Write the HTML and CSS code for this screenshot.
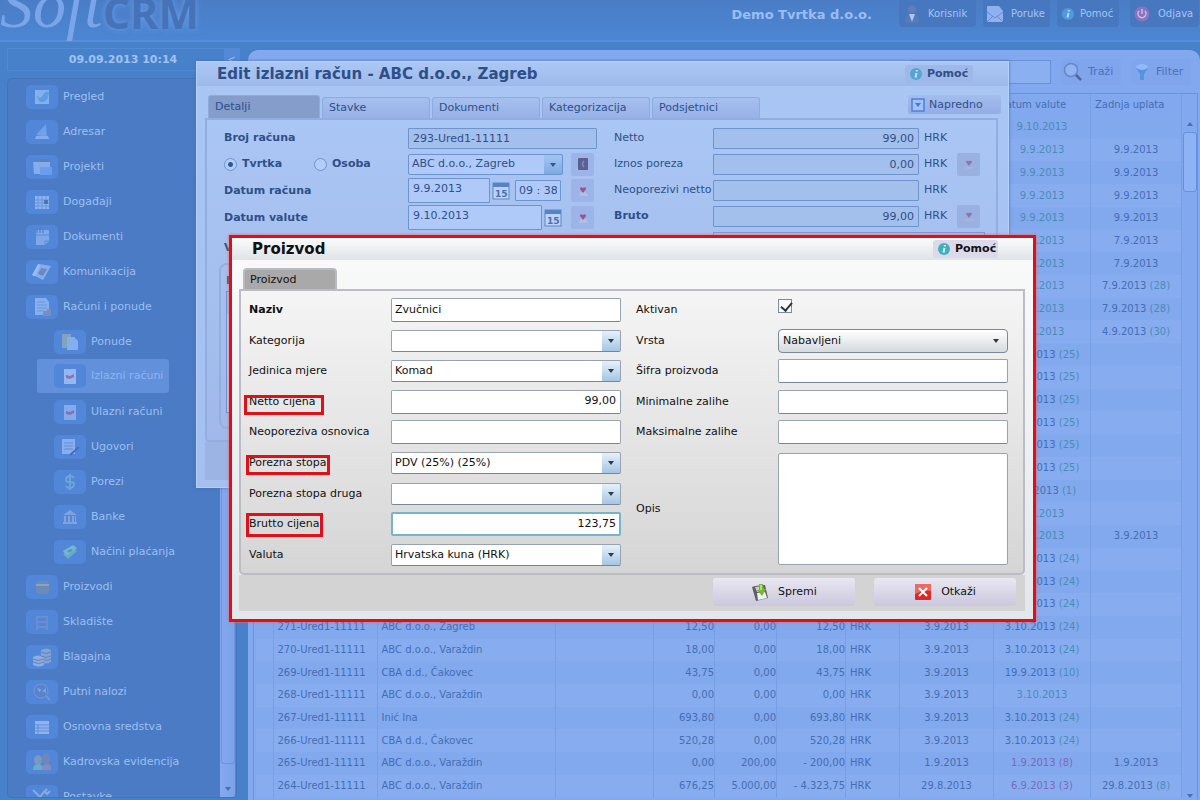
FILE: index.html
```html
<!DOCTYPE html>
<html lang="hr">
<head>
<meta charset="utf-8">
<title>Soft CRM</title>
<link rel="stylesheet" href="styles.css">
</head>
<body>
<div class="app">
  <header class="topbar">
    <div class="logo"><span class="logo-soft">Soft</span><span class="logo-crm">CRM</span></div>
    <strong class="company">Demo Tvrtka d.o.o.</strong>
    <nav class="top-actions">
      <button class="top-btn korisnik"><svg width="18" height="20" viewBox="0 0 18 20"><circle cx="9" cy="5" r="4" fill="#5f7db8"/><path d="M2 18q0-8 7-8t7 8q-7 3-14 0z" fill="#5a79b9"/><path d="M6 10l3 8 3-8z" fill="#a9c6f5"/></svg>Korisnik</button>
      <button class="top-btn poruke"><svg width="18" height="18" viewBox="0 0 18 18"><path d="M1 6V1h12l4 5v11H1z" fill="#8fb1f0"/><path d="M1 7l8 6 8-6M1 17l6-6M17 17l-6-6" stroke="#5f8cdc" fill="none"/></svg>Poruke</button>
      <button class="top-btn pomoc"><svg width="14" height="14" viewBox="0 0 14 14"><circle cx="7" cy="7" r="6" fill="#4c9be0"/><path d="M7.500 6L6.500 10.500M7.800 3v1.500" stroke="#b7d6fb" stroke-width="2"/></svg>Pomoć</button>
      <button class="top-btn odjava"><svg width="16" height="16" viewBox="0 0 16 16"><circle cx="8" cy="8" r="7.500" fill="#8a74bd"/><path d="M5 5a4 4 0 1 0 6 0M8 3v5" stroke="#c3c0ee" stroke-width="1.500" fill="none"/></svg>Odjava</button>
    </nav>
  </header>

  <div class="workspace">
    <aside class="side">
      <div class="clock"><strong>09.09.2013 10:14</strong><button class="collapse" aria-label="Sakrij izbornik">&lt;</button></div>
      <nav class="menu">
        <a href="#"><i><svg viewBox="0 0 20 20"><path d="M3 3h14v14H3z" fill="#8fb8ee"/><path d="M5 8q3 6 6 0t6-2q-1 8-6 9t-6-7z" fill="#5ba3ea"/></svg></i>Pregled</a>
        <a href="#"><i><svg viewBox="0 0 20 20"><path d="M4 13L14 2l1 13z" fill="#71a8f2"/><path d="M4 14h12l1 3H3z" fill="#8db3f0"/></svg></i>Adresar</a>
        <a href="#"><i><svg viewBox="0 0 20 20"><path d="M1 3h17v14H2z" fill="#8fb4ef"/><path d="M1 2h17v3H1z" fill="#5f80bb"/><path d="M8 10h12v8H8z" fill="#6ea2f2"/></svg></i>Projekti</a>
        <a href="#"><i><svg viewBox="0 0 20 20"><path d="M3 4h14v13H3z" fill="#9abcf3"/><path d="M3 8h14M3 11h14M3 14h14M6 4v13M10 4v13M14 4v13" stroke="#6c98dd"/><path d="M12 8h4v4h-4z" fill="#4b71b4"/></svg></i>Događaji</a>
        <a href="#"><i><svg viewBox="0 0 20 20"><path d="M4 3h13v11l-4 4H4z" fill="#87aeee"/><path d="M5 2v4M8 2v4M11 2v4" stroke="#5175b5"/><path d="M4 8h13M13 18v-4h4" stroke="#5c8cda" fill="none"/></svg></i>Dokumenti</a>
        <a href="#"><i><svg viewBox="0 0 20 20"><path d="M7 2l12 2-8 14L1 13z" fill="#91b4ed"/><path d="M6 2q3 0 1 4L4 13q-2 2-4 0z" fill="#a9c5f4"/><path d="M9 6l6 1-4 7-5-2z" fill="#7188bd"/></svg></i>Komunikacija</a>
        <a href="#"><i><svg viewBox="0 0 20 20"><path d="M3 1h11l3 4v13H3z" fill="#91b6f1"/><path d="M5 5h8M5 8h10M5 11h10M5 14h7" stroke="#6e9be3"/><path d="M11 19v-5h4v-2h4v7z" fill="#7d91ba"/></svg></i>Računi i ponude</a>
        <a href="#" class="sub"><i><svg viewBox="0 0 20 20"><path d="M2 2h9v14H2z" fill="#8aa9b8"/><path d="M7 5h7l4 4v9H7z" fill="#8eb5f3"/></svg></i>Ponude</a>
        <a href="#" class="sub active"><i><svg viewBox="0 0 20 20"><path d="M4 3h12v15H4z" fill="#a1c0f5"/><path d="M6 9l4 1 4-2v3l-4 2-4-1z" fill="#9b6fa9"/></svg></i>Izlazni računi</a>
        <a href="#" class="sub"><i><svg viewBox="0 0 20 20"><path d="M4 3h12v15H4z" fill="#8db1ee"/><path d="M6 9l4 1 4-2v3l-4 2-4-1z" fill="#8b6fb5"/></svg></i>Ulazni računi</a>
        <a href="#" class="sub"><i><svg viewBox="0 0 20 20"><path d="M2 2h13v15H2z" fill="#93b6f2"/><path d="M4 6h9M4 9h9M4 12h9" stroke="#628fd9"/><path d="M10 18l9-8" stroke="#4666c7" stroke-width="2"/></svg></i>Ugovori</a>
        <a href="#" class="sub"><i><svg viewBox="0 0 20 20"><path d="M14 6q-1-2-4-2T6 7t4 3 4 3-4 3-4-2M10 2v16" stroke="#74acd3" stroke-width="2" fill="none"/></svg></i>Porezi</a>
        <a href="#" class="sub"><i><svg viewBox="0 0 20 20"><path d="M3 8l7-5 7 5zM4 9h2v6H4zM8 9h2v6H8zM12 9h2v6h-2zM15 9h1v6h-1zM3 15h14v2H3z" fill="#86a9e0"/></svg></i>Banke</a>
        <a href="#" class="sub"><i><svg viewBox="0 0 20 20"><path d="M3 12L13 5l4 4-9 8z" fill="#6ab1c6"/><path d="M3 9l10-6 4 3-10 8z" fill="#7dc0cb"/><path d="M7 9l4-2 2 1-4 3z" fill="#5595c7"/></svg></i>Načini plaćanja</a>
        <a href="#"><i><svg viewBox="0 0 20 20"><rect x="4" y="4" width="13" height="13" rx="3" fill="#6e8cae"/><path d="M4 8h13" stroke="#93a9bd" stroke-width="2"/></svg></i>Proizvodi</a>
        <a href="#"><i><svg viewBox="0 0 20 20"><path d="M5 4v14M15 4v14M5 5h10M5 10h10M5 15h10" stroke="#7b92c4" stroke-width="1.500" fill="none"/></svg></i>Skladište</a>
        <a href="#"><i><svg viewBox="0 0 20 20"><path d="M9 3q5-3 10 0v12q-5 3-10 0z" fill="#8da8d1"/><path d="M1 10q5-3 11 0v8q-5 3-11 0z" fill="#98b4df"/><path d="M9 5q5 3 10 0M9 9q5 3 10 0M12 13q4 1 7-1M1 12q5 3 11 0M1 15q5 3 11 0" stroke="#6085c1" fill="none"/></svg></i>Blagajna</a>
        <a href="#"><i><svg viewBox="0 0 20 20"><circle cx="9" cy="9" r="7" fill="#5a83ca" stroke="#7c9bd2"/><path d="M5 6l4 1-1 4zM10 9l4-3v5z" fill="#83a9e6"/><path d="M14 14l4 4" stroke="#7e9bcf" stroke-width="2"/></svg></i>Putni nalozi</a>
        <a href="#"><i><svg viewBox="0 0 20 20"><path d="M3 4h14v13H3z" fill="#9abcf4"/><path d="M3 8h14M3 11h14M3 14h14M6 7v10" stroke="#668fd6"/></svg></i>Osnovna sredstva</a>
        <a href="#"><i><svg viewBox="0 0 20 20"><ellipse cx="6" cy="8" rx="4" ry="5" fill="#8599bd"/><ellipse cx="14" cy="7" rx="4" ry="6" fill="#7388b5"/><path d="M1 18q0-6 5-6t5 6z" fill="#6fb3bd"/><path d="M10 18q0-6 5-6t4 6z" fill="#8d8fbb"/></svg></i>Kadrovska evidencija</a>
        <a href="#"><i><svg viewBox="0 0 20 20"><path d="M1 3l9 9M18 4l-3 3-2-2 2-3-4 4-6 9" stroke="#8fb0e4" stroke-width="2" fill="none"/></svg></i>Postavke</a>
        <div class="menu-scroll"></div>
      </nav>
    </aside>

    <main class="content">
      <div class="toolbar">
        <input class="search" aria-label="Pretraga">
        <button class="tool"><svg width="22" height="22" viewBox="0 0 22 22"><circle cx="9" cy="9" r="6.500" fill="#8fb3f3" stroke="#6687c8" stroke-width="1.500"/><path d="M14 14l5 5" stroke="#4b68a3" stroke-width="2.500"/></svg>Traži</button>
        <button class="tool"><svg width="20" height="20" viewBox="0 0 20 20"><ellipse cx="10" cy="5" rx="6" ry="3" fill="#8fbaf5"/><path d="M4 6q6 4 12 0l-4 6v6H8v-6z" fill="#5592e2"/></svg>Filter</button>
      </div>
      <div class="grid-area">
        <table class="invoices">
          <colgroup><col class="c-check"><col class="c-id"><col><col class="c-note"><col class="c-net"><col class="c-tax"><col class="c-total"><col class="c-cur"><col class="c-date"><col class="c-due"><col class="c-paid"></colgroup>
          <thead><tr><th></th><th></th><th></th><th></th><th></th><th></th><th></th><th></th><th></th><th>Datum valute</th><th>Zadnja uplata</th></tr></thead>
          <tbody id="rows"></tbody>
        </table>
        <div class="grid-scroll"><span class="up"></span><span class="thumb"></span><span class="down"></span></div>
      </div>
    </main>
  </div>
</div>

<section class="dialog invoice" aria-label="Edit izlazni račun">
  <div class="dlg-title"><h2>Edit izlazni račun - ABC d.o.o., Zagreb</h2>
    <button class="help"><svg width="14" height="14" viewBox="0 0 14 14"><circle cx="7" cy="7" r="6" fill="#57a3d6"/><path d="M7.500 6L6.500 10.500M7.800 3v1.500" stroke="#c5e2fa" stroke-width="2"/></svg>Pomoć</button></div>
  <div class="tabs">
    <button class="tab on">Detalji</button><button class="tab">Stavke</button><button class="tab">Dokumenti</button><button class="tab">Kategorizacija</button><button class="tab">Podsjetnici</button>
    <button class="advanced"><svg width="14" height="14" viewBox="0 0 14 14"><rect x="1" y="1" width="12" height="12" fill="#a4c0f5" stroke="#4e80d8" stroke-width="1.500"/><path d="M4 5h6L7 9z" fill="#4777cf"/></svg>Napredno</button>
  </div>
  <div class="inv-panel">
    <div class="inv-left">
      <div class="line"><label for="broj">Broj računa</label><input id="broj" class="ro grow" value="293-Ured1-11111" readonly></div>
      <div class="line"><span class="radios"><label><input type="radio" name="vrsta" checked>Tvrtka</label><label><input type="radio" name="vrsta">Osoba</label></span>
        <span class="combo blue w-combo"><select aria-label="Tvrtka"><option>ABC d.o.o., Zagreb</option></select></span>
        <button class="sq" aria-label="Adresar"><svg width="12" height="14" viewBox="0 0 12 14"><rect x="1" y="1" width="10" height="12" rx="1" fill="#5a6090"/><path d="M7 4q-3 3 0 6" stroke="#8d8db8" stroke-width="1.500" fill="none"/></svg></button></div>
      <div class="line tall"><label for="datum">Datum računa</label><input id="datum" class="w-date" value="9.9.2013"><svg class="cal" width="18" height="18" viewBox="0 0 18 18"><rect x="1" y="1" width="16" height="16" fill="#bcd2f8" stroke="#6287bd"/><path d="M1 1h16v4H1z" fill="#5384c7"/><text x="3" y="15">15</text></svg><input class="w-time" value="09 : 38" aria-label="Vrijeme"><button class="sq" aria-label="Zadano"><svg width="12" height="14" viewBox="0 0 12 14"><path d="M3 9q3-3 7 0l1 3H2z" fill="#b2bfe5"/><path d="M6 9L3 5q0-3 3-1 3-2 3 1z" fill="#9a548d"/></svg></button></div>
      <div class="line tall"><label for="valuta-d">Datum valute</label><input id="valuta-d" class="w-due" value="9.10.2013"><svg class="cal" width="18" height="18" viewBox="0 0 18 18"><rect x="1" y="1" width="16" height="16" fill="#bcd2f8" stroke="#6287bd"/><path d="M1 1h16v4H1z" fill="#5384c7"/><text x="3" y="15">15</text></svg><button class="sq" aria-label="Zadano"><svg width="12" height="14" viewBox="0 0 12 14"><path d="M3 9q3-3 7 0l1 3H2z" fill="#b2bfe5"/><path d="M6 9L3 5q0-3 3-1 3-2 3 1z" fill="#9a548d"/></svg></button></div>
      <div class="line after"><span>V</span></div>
      <fieldset class="group"><legend>P</legend><div class="group-grid"></div></fieldset>
    </div>
    <div class="inv-right">
      <div class="line"><label for="netto">Netto</label><input id="netto" class="ro num grow" value="99,00" readonly><span class="cur">HRK</span></div>
      <div class="line"><label for="porez">Iznos poreza</label><input id="porez" class="ro num grow" value="0,00" readonly><span class="cur">HRK</span><button class="sq off" aria-label="Zadano"><svg width="12" height="14" viewBox="0 0 12 14"><path d="M3 10h7v2H2z" fill="#a5b6dd"/><path d="M6 9L3 5q0-2 3-1 3-1 3 1z" fill="#9472ad"/></svg></button></div>
      <div class="line"><label for="neop">Neoporezivi netto</label><input id="neop" class="ro num grow" readonly><span class="cur">HRK</span></div>
      <div class="line"><label for="bruto"><b>Bruto</b></label><input id="bruto" class="ro num grow" value="99,00" readonly><span class="cur">HRK</span><button class="sq off" aria-label="Zadano"><svg width="12" height="14" viewBox="0 0 12 14"><path d="M3 10h7v2H2z" fill="#a5b6dd"/><path d="M6 9L3 5q0-2 3-1 3-1 3 1z" fill="#9472ad"/></svg></button></div>
      <textarea class="note" aria-label="Napomena"></textarea>
    </div>
  </div>
  <div class="inv-foot"></div>
</section>

<section class="dialog product" aria-label="Proizvod">
  <div class="dlg-title"><h2>Proizvod</h2>
    <button class="help"><svg width="14" height="14" viewBox="0 0 14 14"><circle cx="7" cy="7" r="6" fill="#3fb0bd"/><path d="M7.500 6L6.500 10.500M7.800 3v1.500" stroke="#eaf9fb" stroke-width="2"/></svg>Pomoć</button></div>
  <div class="tabs"><button class="tab on">Proizvod</button></div>
  <form class="prod-panel">
    <div class="row"><label for="naziv"><b>Naziv</b></label><input id="naziv" value="Zvučnici"></div>
    <div class="row"><label for="aktivan">Aktivan</label><input type="checkbox" id="aktivan" checked></div>
    <div class="row"><label for="kat">Kategorija</label><span class="combo"><select id="kat"><option></option></select></span></div>
    <div class="row"><label for="vrsta">Vrsta</label><span class="combo soft"><select id="vrsta"><option>Nabavljeni</option></select></span></div>
    <div class="row"><label for="jed">Jedinica mjere</label><span class="combo"><select id="jed"><option>Komad</option></select></span></div>
    <div class="row"><label for="sifra">Šifra proizvoda</label><input id="sifra"></div>
    <div class="row"><label for="nc">Netto cijena</label><input id="nc" class="num" value="99,00"><span class="mark netto"></span></div>
    <div class="row"><label for="min">Minimalne zalihe</label><input id="min"></div>
    <div class="row"><label for="no">Neoporeziva osnovica</label><input id="no" class="num"></div>
    <div class="row"><label for="max">Maksimalne zalihe</label><input id="max"></div>
    <div class="row"><label for="ps">Porezna stopa</label><span class="combo"><select id="ps"><option>PDV (25%) (25%)</option></select></span><span class="mark porez"></span></div>
    <div class="row opis"><label for="opis">Opis</label><textarea id="opis"></textarea></div>
    <div class="row"><label for="ps2">Porezna stopa druga</label><span class="combo"><select id="ps2"><option></option></select></span></div>
    <div class="row"><label for="bc">Brutto cijena</label><input id="bc" class="num focus" value="123,75"><span class="mark brutto"></span></div>
    <div class="row"><label for="val">Valuta</label><span class="combo"><select id="val"><option>Hrvatska kuna (HRK)</option></select></span></div>
  </form>
  <div class="actions">
    <button class="action"><svg width="18" height="18" viewBox="0 0 18 18"><path d="M1 4l3-1 10-1 3 13-12 3z" fill="#5d5f60"/><path d="M4 4l8-1 1 5-7 1z" fill="#c9cdcd"/><path d="M6 10l8-1 2 6-9 2z" fill="#f1f3f3"/><path d="M8 1h4v5h3l-4 7-5-6h2z" fill="#76b82f"/><path d="M9 2h2v5H9z" fill="#b6e06b"/></svg>Spremi</button>
    <button class="action"><svg width="18" height="18" viewBox="0 0 18 18"><rect x="1" y="1" width="16" height="16" rx="1" fill="#d92a2a"/><path d="M1 1h16v7q-8-1-16 3z" fill="#ec6a62"/><path d="M5 5l8 8M13 5l-8 8" stroke="#fff" stroke-width="2"/></svg>Otkaži</button>
  </div>
</section>
<script src="app.js"></script>
</body>
</html>
```
FILE: styles.css
```css
* { box-sizing: border-box; }
html, body { height: 100%; }
body { margin: 0; overflow: hidden; position: relative; background: #4781ca; font: 10px/14px "DejaVu Sans", sans-serif; }
button, input, select, textarea { font: inherit; color: inherit; margin: 0; }
button { border: 0; background: none; padding: 0; display: flex; align-items: center; }
svg { flex: none; display: block; }

.app { height: 100%; display: flex; flex-direction: column; color: #a4c4f5; }
.topbar { height: 42px; flex: none; display: flex; align-items: flex-start; background: linear-gradient(#4a7dc6, #4c86d2); border-bottom: 2px solid #568edb; }
.logo { flex: 1; height: 48px; display: flex; align-items: flex-end; white-space: nowrap; }
.logo-soft { font: italic 66px/66px "Liberation Serif", serif; color: #7ba5ea; padding-bottom: 10px; }
.logo-crm { font: bold 43px/44px "Open Sans", sans-serif; color: #4672b8; padding: 0 0 13px; text-shadow: 0 0 6px #6c9cea; }
.company { font-size: 13px; line-height: 30px; color: #9bbdf3; margin-right: 27px; }
.top-actions { display: flex; }
.top-btn { height: 27px; background: #4777bf; border-radius: 0 0 4px 4px; padding: 0 4px; margin-right: 7px; white-space: nowrap; }
.korisnik { width: 77px; gap: 7px; }
.poruke { width: 67px; gap: 7px; padding: 0 3px; }
.pomoc { width: 62px; gap: 5px; margin-right: 11px; }
.odjava { width: 69px; gap: 8px; margin-right: 1px; }

.workspace { flex: 1; min-height: 0; display: flex; gap: 8px; }
.side { width: 233px; margin-left: 7px; flex: none; display: flex; flex-direction: column; padding-top: 6px; }
.clock { height: 23px; flex: none; display: flex; align-items: center; border: 1px solid #538ad6; color: #9fc2f3; }
.clock strong { flex: 1; text-align: center; font-size: 11px; padding-left: 14px; }
.collapse { width: 15px; height: 22px; background: #5489d8; justify-content: center; }
.menu { flex: 1; margin: 7px 3px 2px 0; padding: 0 0 0 18px; overflow: hidden; background: #4a7bc4; border: 1px solid #4373ba; border-radius: 5px; position: relative; }
.menu a { height: 35px; display: flex; align-items: center; gap: 5px; color: #9dbff2; text-decoration: none; font-size: 11px; }
.menu i { width: 32px; height: 24px; flex: none; background: #5286d8; border-radius: 5px; display: grid; place-items: center; }
.menu i svg { width: 20px; height: 20px; opacity: .85; }
.menu .sub { margin-left: 11px; padding-left: 17px; width: 132px; white-space: nowrap; }
.menu .active { height: 34px; margin-bottom: 1px; background: #6290da; border-radius: 3px; color: #8fb5f3; }
.menu-scroll { position: absolute; right: 0; top: 0; bottom: 0; width: 16px; border-right: 1px solid #5683cd; background: linear-gradient(90deg, #84a9f1, #7ba1e9); }
.menu-scroll::before { content: ""; position: absolute; left: 1px; right: 0; bottom: 33px; height: 300px; border: 1px solid #6c94dd; border-top: 0; border-radius: 0 0 3px 3px; }
.menu-scroll::after { content: ""; position: absolute; left: 5px; bottom: 6px; border: 3px solid transparent; border-top: 4px solid #486eb5; border-bottom: 0; }

.content { flex: 1; min-width: 0; margin-top: 8px; background: #82a9ef; border-radius: 10px 10px 0 0; display: flex; flex-direction: column; color: #456db4; padding: 0 2px 0 5px; }
.toolbar { height: 43px; flex: none; display: flex; justify-content: flex-end; align-items: center; gap: 10px; padding-right: 7px; color: #4a72bb; font-size: 11px; }
.search { width: 140px; height: 24px; border: 1px solid #6991d8; background: #8bb0f2; }
.tool { width: 60px; height: 26px; gap: 4px; padding-left: 1px; background: #80a5ec; border-radius: 4px; }
.grid-area { flex: 1; min-height: 0; display: flex; border: 1px solid #6b93da; border-bottom: 0; padding: 0 0 2px 2px; }
.invoices { flex: 1; height: 100%; table-layout: fixed; border-collapse: collapse; width: 100%; }
.invoices th, .invoices td { padding: 0 4px; border-right: 1px solid #769fe4; text-align: left; font-weight: 400; white-space: nowrap; overflow: hidden; }
.invoices th { height: 22px; }
.invoices tbody tr:nth-child(odd) { background: #82a8ed; }
.invoices tbody tr:nth-child(even) { background: #87adf0; }
.invoices td.r { text-align: right; padding: 0; }
.invoices td.c { text-align: center; }
.ok { color: #4a8cb9; } .late { color: #7c69bb; }
.c-check { width: 17px; } .c-id { width: 104px; } .c-note { width: 98px; } .c-net { width: 61px; } .c-tax { width: 62px; } .c-total { width: 69px; } .c-cur { width: 54px; } .c-date { width: 94px; } .c-due { width: 97px; } .c-paid { width: 91px; }
.grid-scroll { width: 15px; flex: none; margin-top: 22px; display: flex; flex-direction: column; align-items: center; padding-top: 6px; }
.up { border: 3px solid transparent; border-bottom: 4px solid #486eb5; border-top: 0; }
.thumb { width: 14px; height: 60px; margin: 6px 0 auto; border: 1px solid #6790da; border-radius: 3px; background: #8db2f5; }
.down { border: 3px solid transparent; border-top: 4px solid #486eb5; border-bottom: 0; }

.dialog { position: absolute; display: flex; flex-direction: column; }
.dlg-title { flex: none; display: flex; align-items: center; justify-content: space-between; }
.dlg-title h2 { margin: 0; font-size: 15px; line-height: 20px; }
.help { height: 18px; gap: 4px; padding: 0 2px 0 4px; font-weight: 700; font-size: 11px; border-radius: 3px; width: 66px; }
.tabs { display: flex; align-items: flex-end; flex: none; }
.num { text-align: right; }

.invoice { left: 196px; right: 191px; top: 61px; height: 427px; padding-right: 8px; padding-left: 8px; color: #2f4f88; background: linear-gradient(#a9c6f5, #a4bff0); border: 1px solid #b5d0fa; box-shadow: 0 0 3px #4a6db0; }
.invoice .dlg-title { height: 24px; margin: 0 -8px; padding: 0 35px 0 20px; background: linear-gradient(#abc7f3, #9dbaeb); }
.invoice .help { background: #9fb8ea; width: 68px; }
.invoice .tabs { height: 32px; padding: 0 0 0 3px; gap: 2px; }
.invoice .tab { width: 108px; height: 21px; padding-left: 6px; border: 1px solid #8eabe0; border-bottom: 0; border-radius: 3px 3px 0 0; background: linear-gradient(#a5bfee, #98b1e8); font-size: 11px; }
.invoice .tab.on { width: 112px; height: 23px; background: #849dcb; }
.advanced { width: 93px; height: 19px; margin: 0 -1px 4px auto; gap: 4px; padding-left: 3px; background: linear-gradient(#a3bdee, #94ade6); border-radius: 3px; font-size: 11px; }
.inv-panel { flex: 1; min-height: 0; display: flex; margin-right: 2px; gap: 17px; padding: 5px 11px 0 17px; border: 2px solid #92aee1; border-radius: 0 0 4px 4px; overflow: hidden; background: linear-gradient(#aac6f4, #a0b9ea); }
.inv-left { width: 373px; flex: none; font-weight: 700; }
.inv-right { flex: 1; }
.inv-left input, .inv-left select { font-weight: 400; }
.line { display: flex; align-items: center; height: 26px; }
.line.tall { height: 27px; }
.line > label, .radios { width: 184px; flex: none; font-size: 11px; }
.inv-right .line > label { width: 99px; }
.radios { display: flex; }
.radios label { width: 90px; display: flex; align-items: center; }
.radios input { appearance: none; width: 13px; height: 13px; margin-right: 5px; border: 1px solid #6d93cf; border-radius: 50%; background: #b4cdf8; }
.radios input:checked { background: radial-gradient(#35558e 2px, #b4cdf8 3px); }
.invoice input:not([type=radio]) { height: 21px; min-width: 0; border: 1px solid #6d94cc; border-radius: 1px; background: #afcaf8; padding: 0 4px; font-size: 11px; }
.invoice input.ro { background: #a3bfec; }
.invoice .tall input { height: 25px; padding-bottom: 4px; }
.grow { flex: 1; }
.invoice .w-date { width: 82px; } .invoice .w-due { width: 134px; } .invoice .tall .w-time { width: 46px; height: 21px; padding: 0 3px; }
.w-combo { width: 155px; flex: none; }
.cal { margin: 0 5px 0 2px; }
.cal text { font: 700 9px "DejaVu Sans", sans-serif; fill: #4a6fae; }
.sq { width: 23px; height: 23px; flex: none; justify-content: center; background: #9cb4e8; border-radius: 2px; margin-left: 8px; }
.tall .sq { margin-left: auto; margin-right: 3px; }
.cur { width: 30px; margin-left: 5px; font-size: 11px; flex: none; }
.inv-right .line:not(:has(.sq))::after { content: ""; width: 31px; flex: none; }
.sq.off { background: #98b1e0; }
.inv-right .sq { margin-left: 3px; margin-right: 5px; width: 23px; }
.note { width: 272px; height: 40px; margin: 3px 0 0 99px; border: 1px solid #7b9bd0; background: none; display: block; }
.after { margin-top: 4px; font-size: 11px; }
.group { margin: 2px 0 0 -5px; height: 166px; border: 2px solid #93aee1; border-radius: 8px; padding: 6px 5px; }
.group legend { float: left; padding: 0; font-size: 11px; line-height: 20px; }
.group-grid { clear: both; height: 122px; border: 1px solid #6d94cc; background: linear-gradient(#a3bfee 22px, #b6cffa 22px); }
.inv-foot { height: 38px; margin-bottom: 7px; flex: none; background: #9cb4e4; }

.product { left: 229px; right: 164px; top: 235px; height: 387px; border: 3px solid #dd1018; padding: 0 8px 8px 7px; color: #111; background: linear-gradient(#fafafa, #e3e7ea); box-shadow: 0 0 3px #e66; }
.product .dlg-title { height: 22px; margin: 0 -8px 0 -7px; padding: 0 35px 1px 20px; background: linear-gradient(#fafbfb, #dfe3e6); }
.product .help { background: #dcdaea; width: 65px; }
.product .tabs { height: 29px; padding-left: 4px; }
.product .tab { width: 94px; height: 21px; padding-left: 5px; background: #a9a9a9; border: 2px solid #b9bbc2; border-bottom: 0; border-radius: 4px 4px 0 0; font-size: 11px; }
.prod-panel { flex: 1; min-height: 0; margin: 0; display: grid; grid-template-columns: 372px 1fr; grid-auto-rows: 1fr; column-gap: 15px; padding: 4px 15px 3px 8px; border: 2px solid #bbbcc6; border-radius: 0 0 5px 5px; background: linear-gradient(#f5f5f5, #d5d5d5); }
.row { display: flex; align-items: center; position: relative; min-height: 0; font-size: 11px; }
.row > label { width: 142px; flex: none; }
.row > input:not([type=checkbox]), .combo { flex: 1; min-width: 0; }
.row > input:not([type=checkbox]) { height: 24px; border: 1px solid #97a3af; border-bottom-color: #76869a; border-radius: 2px; background: #fff; padding: 0 4px 2px 3px; }
.row > input.focus { border: 2px solid #75b5c9; padding-right: 3px; }
.row input[type=checkbox] { appearance: none; width: 14px; height: 14px; margin-bottom: 8px; border: 1px solid #7b8b98; background: #f8fafb; position: relative; }
.row input[type=checkbox]::after { content: ""; position: absolute; left: 4px; top: 0; width: 5px; height: 9px; border: solid #333; border-width: 0 2px 2px 0; transform: rotate(40deg); }
.opis { grid-column: 2; grid-row: 6 / span 4; }
.opis textarea { flex: 1; height: 112px; border: 1px solid #97a3af; border-radius: 2px; resize: none; }
.combo { position: relative; display: flex; height: 22px; }
.combo select { appearance: none; flex: 1; min-width: 0; border: 1px solid #97a3af; border-bottom-color: #76869a; border-radius: 2px; padding: 0 20px 0 3px; background: linear-gradient(#e5f1fb, #a5c6e3) right / 18px 100% no-repeat #fff; }
.combo::after { content: ""; position: absolute; right: 7px; top: 9px; border: 3px solid transparent; border-top: 4px solid #2c3b48; border-bottom: 0; }
.combo.soft { height: 24px; }
.combo.soft select { background: linear-gradient(#fff, #d5dade); border-color: #7c8a98; border-radius: 4px; padding-left: 4px; }
.combo.soft::after { right: 9px; top: 10px; }
.combo.blue { height: 21px; flex: none; }
.combo.blue select { font-size: 11px; border-color: #6d94cc; background: linear-gradient(#a2c4f4, #80a9e4) right / 18px 100% no-repeat #afcaf8; }
.combo.blue::after { border-top-color: #35558e; }
.mark { position: absolute; border: 3px solid #e01016; pointer-events: none; }
.mark.netto { left: -5px; top: 8px; width: 80px; height: 20px; }
.mark.porez { left: -3px; top: 7px; width: 84px; height: 20px; }
.mark.brutto { left: -3px; top: 4px; width: 77px; height: 24px; }
.actions { flex: none; height: 36px; background: #d3d3d3; display: flex; justify-content: flex-end; gap: 19px; padding: 3px 9px 5px; }
.action { width: 142px; justify-content: center; gap: 9px; background: linear-gradient(#e9e7f1, #cbc8de); border-radius: 3px; font-size: 11px; }
```
FILE: app.js
```js
const none = ["", "", "", "", "", ""];
const ok = t => `<span class="ok">${t}</span>`;
const late = t => `<span class="late">${t}</span>`;
const due = (d, n) => `${d} ${ok("(" + n + ")")}`;
const fill = (d, paid = "") => ["", ...none, "", d, paid];

const rows = [
  fill(ok("9.10.2013")),
  ...Array(4).fill(fill(ok("9.9.2013"), "9.9.2013")),
  fill(ok("9.9.2013"), "7.9.2013"),
  fill(ok("7.9.2013"), "7.9.2013"),
  fill(ok("9.9.2013"), due("7.9.2013", 28)),
  fill(ok("9.9.2013"), due("7.9.2013", 28)),
  fill(ok("9.9.2013"), due("4.9.2013", 30)),
  ...Array(6).fill(fill(due("4.10.2013", 25))),
  fill(due("10.9.2013", 1)),
  fill(ok("3.9.2013")),
  fill(ok("3.9.2013"), "3.9.2013"),
  ...Array(3).fill(fill(due("3.10.2013", 24))),
  ["271-Ured1-11111", "ABC d.o.o., Zagreb", "", "12,50", "0,00", "12,50", "HRK", "3.9.2013", due("3.10.2013", 24), ""],
  ["270-Ured1-11111", "ABC d.o.o., Varaždin", "", "18,00", "0,00", "18,00", "HRK", "3.9.2013", due("3.10.2013", 24), ""],
  ["269-Ured1-11111", "CBA d.d., Čakovec", "", "43,75", "0,00", "43,75", "HRK", "3.9.2013", due("19.9.2013", 10), ""],
  ["268-Ured1-11111", "ABC d.o.o., Varaždin", "", "0,00", "0,00", "0,00", "HRK", "3.9.2013", ok("3.10.2013"), ""],
  ["267-Ured1-11111", "Inić Ina", "", "693,80", "0,00", "693,80", "HRK", "3.9.2013", due("3.10.2013", 24), ""],
  ["266-Ured1-11111", "CBA d.d., Čakovec", "", "520,28", "0,00", "520,28", "HRK", "3.9.2013", due("3.10.2013", 24), ""],
  ["265-Ured1-11111", "ABC d.o.o., Varaždin", "", "0,00", "200,00", "- 200,00", "HRK", "1.9.2013", late("1.9.2013 (8)"), "1.9.2013"],
  ["264-Ured1-11111", "ABC d.o.o., Varaždin", "", "676,25", "5.000,00", "- 4.323,75", "HRK", "29.8.2013", late("6.9.2013 (3)"), due("29.8.2013", 8)]
];

const align = ["", "", "", "r", "r", "r", "", "c", "c", "c"];
document.getElementById("rows").innerHTML = rows
  .map(r => "<tr><td></td>" + r.map((c, i) => `<td class="${align[i]}">${c}</td>`).join("") + "</tr>")
  .join("");
```
